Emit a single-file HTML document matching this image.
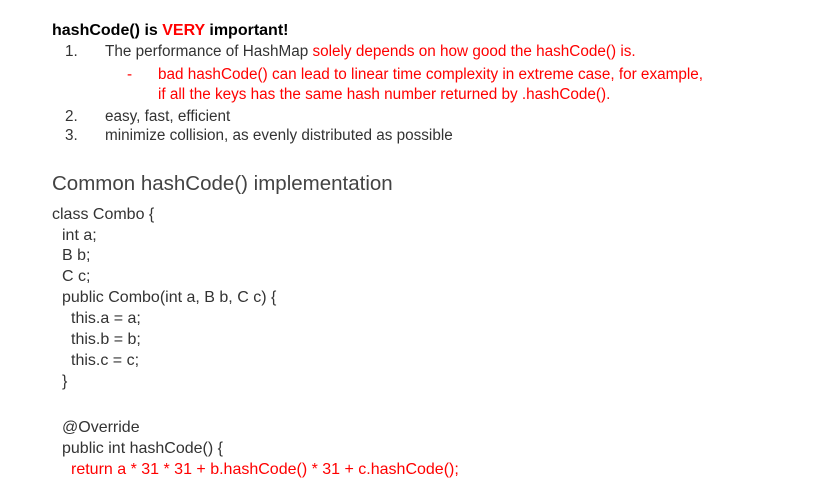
<!DOCTYPE html>
<html><head><meta charset="utf-8"><style>
body{margin:0;width:817px;height:497px;background:#fff;font-family:"Liberation Sans",Arial,sans-serif;position:relative;overflow:hidden}
div{position:absolute;white-space:nowrap;font-size:15.3px;color:#333;line-height:18px}
.c{font-size:16px}
.r{color:#f00}
</style></head><body>
<div style="left:52px;top:22px;color:#000;font-weight:bold;font-size:16px">hashCode() is <span class="r">VERY</span> important!</div>
<div style="left:65px;top:43px">1.</div>
<div style="left:105px;top:43px">The performance of HashMap <span class="r">solely depends on how good the hashCode() is.</span></div>
<div class="r" style="left:127px;top:66px">-</div>
<div class="r" style="left:158px;top:66px">bad hashCode() can lead to linear time complexity in extreme case, for example,</div>
<div class="r" style="left:158px;top:86px">if all the keys has the same hash number returned by .hashCode().</div>
<div style="left:65px;top:108px">2.</div>
<div style="left:105px;top:108px">easy, fast, efficient</div>
<div style="left:65px;top:127px">3.</div>
<div style="left:105px;top:127px">minimize collision, as evenly distributed as possible</div>
<div style="left:52px;top:173px;font-size:20.5px;line-height:22px;color:#434343">Common hashCode() implementation</div>
<div class="c" style="left:52px;top:206px">class Combo {</div>
<div class="c" style="left:62px;top:227px">int a;</div>
<div class="c" style="left:62px;top:247px">B b;</div>
<div class="c" style="left:62px;top:268px">C c;</div>
<div class="c" style="left:62px;top:289px">public Combo(int a, B b, C c) {</div>
<div class="c" style="left:71px;top:310px">this.a = a;</div>
<div class="c" style="left:71px;top:331px">this.b = b;</div>
<div class="c" style="left:71px;top:352px">this.c = c;</div>
<div class="c" style="left:62px;top:373px">}</div>
<div class="c" style="left:62px;top:419px">@Override</div>
<div class="c" style="left:62px;top:440px">public int hashCode() {</div>
<div class="c r" style="left:71px;top:461px">return a * 31 * 31 + b.hashCode() * 31 + c.hashCode();</div>
</body></html>
